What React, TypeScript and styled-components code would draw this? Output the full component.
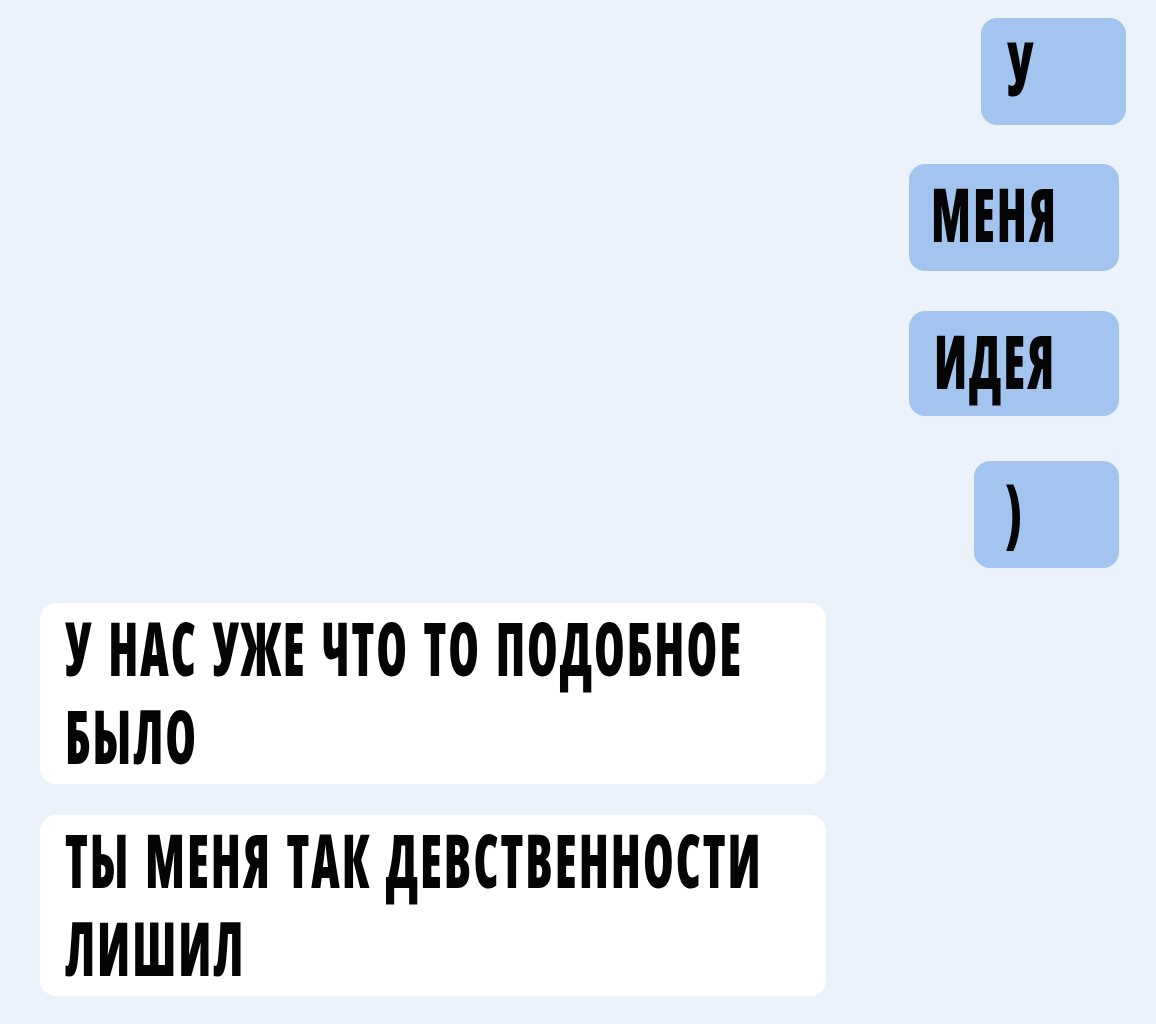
import React from "react";
import styled, { createGlobalStyle } from "styled-components";

const GlobalStyle = createGlobalStyle`
  html, body { margin: 0; padding: 0; background: #ebf2fb; }
  #root { min-height: 1024px; }
`;

const SCALE = 0.66;

const Chat = styled.main`
  box-sizing: border-box;
  width: 1156px;
  min-height: 1024px;
  padding: 18px 30px 28px 40px;
  display: flex;
  flex-direction: column;
  background: #ebf2fb;
  font-family: "Open Sans", "Roboto", sans-serif;
  font-stretch: 75%;
  font-weight: 800;
  font-size: 75px;
  line-height: 88px;
  letter-spacing: 3px;
  word-spacing: 6px;
  color: #050505;
  text-transform: uppercase;
  overflow: hidden;
`;

const Bubble = styled.div<{ $w: number; $mt: number; $mr?: number; $pl: number; $h?: number }>`
  box-sizing: border-box;
  width: ${(p) => p.$w}px;
  height: ${(p) => p.$h ?? 107}px;
  margin-top: ${(p) => p.$mt}px;
  margin-right: ${(p) => p.$mr ?? 7}px;
  align-self: flex-end;
  padding: 5px 0 0 ${(p) => p.$pl}px;
  background: #a3c4ee;
  border-radius: 16px;
`;

const Reply = styled.div<{ $mt: number }>`
  box-sizing: border-box;
  width: 786px;
  min-height: 181px;
  margin-top: ${(p) => p.$mt}px;
  align-self: flex-start;
  padding: 0 25px 5px 25px;
  background: #ffffff;
  border-radius: 16px;
`;

const Words = styled.span`
  display: block;
  width: calc(100% / ${SCALE});
  transform: scaleX(${SCALE});
  transform-origin: left top;
  white-space: normal;
`;

export default function App() {
  return (
    <>
      <GlobalStyle />
      <Chat>
        <Bubble $w={145} $mt={0} $mr={0} $pl={26}>
          <Words>у</Words>
        </Bubble>
        <Bubble $w={210} $mt={39} $pl={22}>
          <Words>меня</Words>
        </Bubble>
        <Bubble $w={210} $mt={40} $pl={25} $h={105}>
          <Words>идея</Words>
        </Bubble>
        <Bubble $w={145} $mt={45} $pl={32}>
          <Words>)</Words>
        </Bubble>
        <Reply $mt={35}>
          <Words>у нас уже что то подобное было</Words>
        </Reply>
        <Reply $mt={31}>
          <Words>ты меня так девственности лишил</Words>
        </Reply>
      </Chat>
    </>
  );
}
